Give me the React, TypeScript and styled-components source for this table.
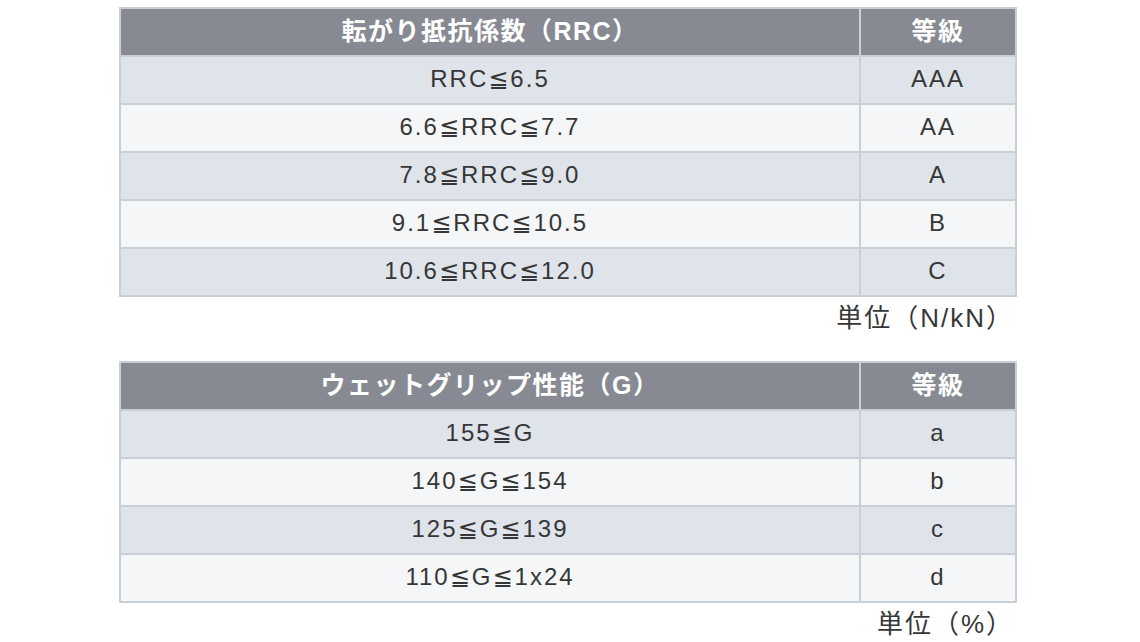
import React from "react";
import styled, { createGlobalStyle } from "styled-components";

const GlobalStyle = createGlobalStyle`
  body {
    margin: 0;
    background: #ffffff;
    font-family: "Liberation Sans", "Noto Sans CJK JP", sans-serif;
  }
`;

const Page = styled.div`
  width: 1140px;
  height: 642px;
  padding: 7px 0 0 119px;
  box-sizing: border-box;
  display: flex;
  flex-direction: column;
`;

const Block = styled.div<{ $gap?: number }>`
  width: 898px;
  margin-bottom: ${(p) => p.$gap ?? 0}px;
`;

const Table = styled.table`
  width: 100%;
  border-collapse: collapse;
  border: 2px solid #c8cfd9;
  table-layout: fixed;
`;

const HeadCell = styled.th<{ $w?: number }>`
  width: ${(p) => (p.$w ? `${p.$w}px` : "auto")};
  height: 43px;
  padding: 0 0 3px;
  line-height: 26px;
  background: #878a92;
  color: #ffffff;
  font-family: "Liberation Sans", "Noto Sans CJK JP", sans-serif;
  font-weight: 700;
  font-size: 25px;
  letter-spacing: 1.5px;
  text-align: center;
  border-right: 2px solid #c8cfd9;
  &:last-child {
    border-right: none;
  }
`;

const Row = styled.tr<{ $odd: boolean }>`
  background: ${(p) => (p.$odd ? "#dfe3ea" : "#f4f6f8")};
`;

const Cell = styled.td`
  height: 43px;
  padding: 0 0 3px;
  line-height: 26px;
  border: 2px solid #c8cfd9;
  color: #363636;
  font-family: "Liberation Sans", "DejaVu Sans", "Noto Sans CJK JP", sans-serif;
  font-size: 24px;
  letter-spacing: 2px;
  text-align: center;
`;

const Unit = styled.div`
  text-align: right;
  padding-right: 3px;
  margin-top: 5px;
  font-size: 26px;
  line-height: 32px;
  color: #363636;
  letter-spacing: 2px;
  font-family: "Liberation Sans", "Noto Sans CJK JP", sans-serif;
`;

type Spec = { title: string; rows: [string, string][]; unit: string };

const tables: Spec[] = [
  {
    title: "転がり抵抗係数（RRC）",
    rows: [
      ["RRC≦6.5", "AAA"],
      ["6.6≦RRC≦7.7", "AA"],
      ["7.8≦RRC≦9.0", "A"],
      ["9.1≦RRC≦10.5", "B"],
      ["10.6≦RRC≦12.0", "C"],
    ],
    unit: "単位（N/kN）",
  },
  {
    title: "ウェットグリップ性能（G）",
    rows: [
      ["155≦G", "a"],
      ["140≦G≦154", "b"],
      ["125≦G≦139", "c"],
      ["110≦G≦1x24", "d"],
    ],
    unit: "単位（%）",
  },
];

function GradeTable({ spec }: { spec: Spec }) {
  return (
    <Table>
      <thead>
        <tr>
          <HeadCell>{spec.title}</HeadCell>
          <HeadCell $w={154}>等級</HeadCell>
        </tr>
      </thead>
      <tbody>
        {spec.rows.map(([range, grade], i) => (
          <Row key={range} $odd={i % 2 === 0}>
            <Cell>{range}</Cell>
            <Cell>{grade}</Cell>
          </Row>
        ))}
      </tbody>
    </Table>
  );
}

export default function App() {
  return (
    <>
      <GlobalStyle />
      <Page>
        <Block $gap={27}>
          <GradeTable spec={tables[0]} />
          <Unit>{tables[0].unit}</Unit>
        </Block>
        <Block>
          <GradeTable spec={tables[1]} />
          <Unit>{tables[1].unit}</Unit>
        </Block>
      </Page>
    </>
  );
}
